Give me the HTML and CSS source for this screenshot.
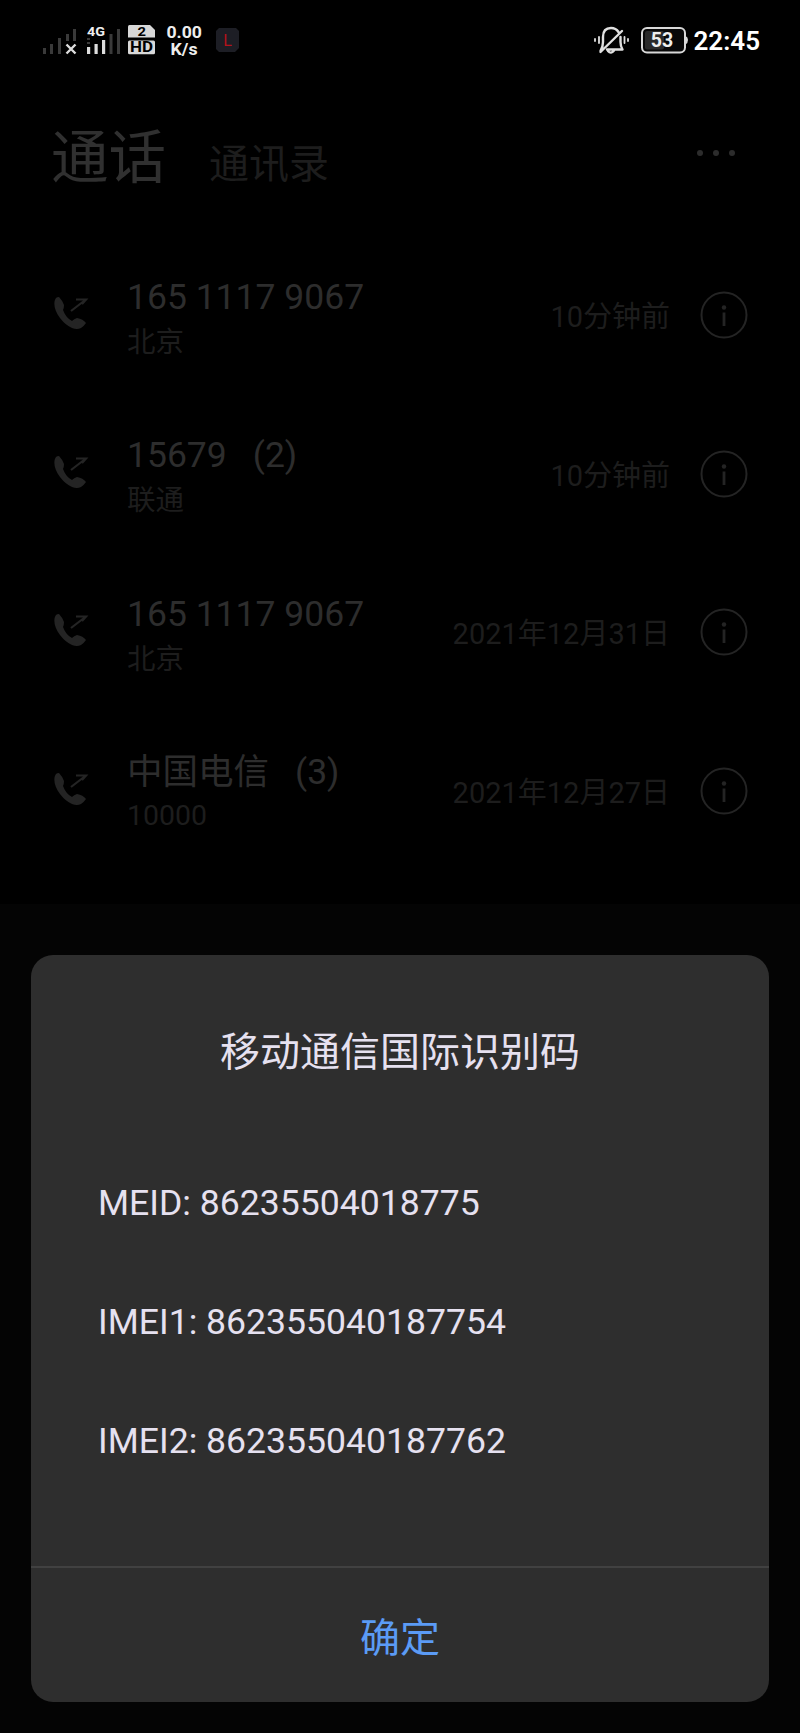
FILE: index.html
```
<!DOCTYPE html>
<html lang="zh-CN">
<head>
    <meta charset="UTF-8">
    <meta name="viewport" content="width=device-width, initial-scale=1.0">
    <title>通话</title>
    <link rel="stylesheet" href="styles.css">
</head>
<body>
    <svg class="defs" width="0" height="0">
        <symbol id="call" viewBox="0 0 36 34">
            <path d="M3 2C0 6 1 14 7 22C14 31 22 35 28 32Q31 30 33 27Q30 23 24 22Q21 23 19 25Q13 22 10 14Q11 12 11 9Q9 4 6 1Q4 1 3 2Z" fill="currentColor"/>
            <path d="M18 15L31 5M23 3.5H33L29 8" fill="none" stroke="currentColor" stroke-width="2.2"/>
        </symbol>
        <symbol id="info" viewBox="0 0 48 48">
            <circle cx="24" cy="24" r="22.5" fill="none" stroke="currentColor" stroke-width="2"/>
            <circle cx="24" cy="16.5" r="2.2" fill="currentColor"/>
            <path d="M24 21.500V35" stroke="currentColor" stroke-width="2.8"/>
        </symbol>
    </svg>

    <div class="status-bar">
        <svg class="status-left" width="240" height="80" viewBox="0 0 240 80">
            <!-- SIM 1 -->
            <path fill="#3a3a3a" d="M43 48h3v6h-3zM50 44h3v10h-3zM58 38h3v16h-3zM66 34h3v7h-3zM73 29h3v12h-3z"/>
            <path stroke="#ddd" stroke-width="2.4" d="M66.500 44.500l9 9M75.500 44.500l-9 9"/>
            <!-- SIM 2 -->
            <text x="87" y="36" class="net" textLength="18" lengthAdjust="spacingAndGlyphs">4G</text>
            <path fill="#ddd" d="M87 47h3.200v7h-3.200zM94.500 44h3.200v10h-3.200zM102 40h3.200v14h-3.200z"/>
            <path fill="#3a3a3a" d="M109.500 34h3v20h-3zM117 29h3v25h-3zM87 38h3v2h-3zM87 42h3v2h-3z"/>
            <path fill="#d8d8d8" d="M129.500 25H150L155 30V37.500H128V26.500Q128 25 129.500 25Z"/>
            <rect x="128" y="40.500" width="27" height="13.800" rx="1.500" fill="#d8d8d8"/>
            <text x="137.500" y="36" class="sim" textLength="8.500" lengthAdjust="spacingAndGlyphs">2</text>
            <text x="130" y="52.300" class="hd" textLength="23" lengthAdjust="spacingAndGlyphs">HD</text>
            <text x="166.500" y="38.300" class="speed" textLength="35.500" lengthAdjust="spacingAndGlyphs">0.00</text>
            <text x="170.500" y="54.800" class="speed" textLength="27" lengthAdjust="spacingAndGlyphs">K/s</text>
            <path fill="#1d1e25" d="M219 28h17l3 3v17l-4 4h-16l-3-3v-18z"/>
            <text x="227.500" y="46" class="app">L</text>
        </svg>
        <svg class="status-right" width="180" height="80" viewBox="590 0 180 80">
            <g fill="none" stroke="#e0e0e0" stroke-width="2.400" stroke-linecap="round" stroke-linejoin="round">
                <path d="M600.500 51Q603 47 603 42V37Q603 28 611 28Q616 28 618.500 32M620.500 37V42Q620.500 46 622.500 49.500H607M622 31L600.500 52M608 51Q611 54.500 614 50.500"/>
                <path stroke-width="1.800" d="M595 39v2M599 37v6M624.500 37v6M628 39v2"/>
            </g>
            <rect x="642" y="28" width="43" height="24.500" rx="5" fill="#080808" stroke="#d8d8d8" stroke-width="2"/>
            <rect x="645" y="31" width="19" height="18.500" rx="2" fill="#2a2a2a"/>
            <path fill="#d8d8d8" d="M685.500 36Q688 37 688 40Q688 43 685.500 44.500Z"/>
            <text x="662" y="47.200" class="battery">53</text>
            <text x="693.500" y="50.300" class="clock">22:45</text>
        </svg>
    </div>

    <div class="tabs">
        <span class="tab-active">通话</span>
        <span class="tab">通讯录</span>
        <span class="more"><i></i><i></i><i></i></span>
    </div>

    <div class="call-list">
        <div class="call">
            <svg class="call-icon"><use href="#call"/></svg>
            <div class="who">
                <div class="number">165 1117 9067</div>
                <div class="place">北京</div>
            </div>
            <div class="time">10分钟前</div>
            <svg class="info"><use href="#info"/></svg>
        </div>
        <div class="call">
            <svg class="call-icon"><use href="#call"/></svg>
            <div class="who">
                <div class="number">15679<span class="count">(2)</span></div>
                <div class="place">联通</div>
            </div>
            <div class="time">10分钟前</div>
            <svg class="info"><use href="#info"/></svg>
        </div>
        <div class="call">
            <svg class="call-icon"><use href="#call"/></svg>
            <div class="who">
                <div class="number">165 1117 9067</div>
                <div class="place">北京</div>
            </div>
            <div class="time">2021年12月31日</div>
            <svg class="info"><use href="#info"/></svg>
        </div>
        <div class="call">
            <svg class="call-icon"><use href="#call"/></svg>
            <div class="who">
                <div class="number">中国电信<span class="count">(3)</span></div>
                <div class="place digits">10000</div>
            </div>
            <div class="time">2021年12月27日</div>
            <svg class="info"><use href="#info"/></svg>
        </div>
    </div>

    <div class="bottom">
        <div class="dialog">
            <h1>移动通信国际识别码</h1>
            <div class="codes">
                <p>MEID: 86235504018775</p>
                <p>IMEI1: 862355040187754</p>
                <p>IMEI2: 862355040187762</p>
            </div>
            <button type="button">确定</button>
        </div>
    </div>
</body>
</html>
```
FILE: styles.css
```
* {
    box-sizing: border-box;
}
body {
    margin: 0;
    width: 800px;
    height: 1733px;
    overflow: hidden;
    display: flex;
    flex-direction: column;
    background: #000;
    font-family: Roboto, "Noto Sans CJK SC", sans-serif;
}
.defs {
    position: absolute;
}
.status-bar {
    display: flex;
    justify-content: space-between;
    height: 80px;
    padding-right: 30px;
}
.status-bar text {
    font-weight: bold;
    fill: #eee;
}
.status-bar .net {
    font-size: 12.5px;
}
.status-bar .sim,
.status-bar .hd {
    fill: #000;
    font-size: 13px;
}
.status-bar .hd {
    font-size: 14px;
}
.status-bar .speed {
    font-size: 16px;
}
.status-bar .app {
    font-size: 16px;
    font-weight: normal;
    fill: #b5121b;
    text-anchor: middle;
}
.status-bar .battery {
    font-size: 19.5px;
    text-anchor: middle;
}
.status-bar .clock {
    font-size: 26px;
    font-weight: 600;
    fill: #fff;
}
.tabs {
    display: flex;
    align-items: baseline;
    height: 156px;
    padding: 37px 65px 0 51px;
}
.tab-active {
    font-size: 57.5px;
    line-height: 84px;
    color: #303030;
}
.tab {
    margin-left: 43px;
    font-size: 40px;
    color: #1d1d1d;
}
.more {
    display: flex;
    gap: 10px;
    margin-left: auto;
    align-self: flex-start;
    padding-top: 33px;
}
.more i {
    width: 6px;
    height: 6px;
    border-radius: 50%;
    background: #2c2c2c;
}
.call-list {
    height: 668px;
}
.call {
    display: flex;
    align-items: center;
    height: 158.5px;
    padding: 0 52px 0 53px;
}
.call-icon {
    width: 36px;
    height: 34px;
    margin-top: -4px;
    color: #242424;
}
.who {
    margin-left: 38px;
    padding-top: 9px;
}
.number {
    height: 46px;
    font-size: 35.5px;
    line-height: 44px;
    color: #2d2d2d;
}
.count {
    margin-left: 26px;
}
.place {
    height: 44px;
    font-size: 28.5px;
    line-height: 44px;
    color: #1d1d1d;
}
.digits {
    line-height: 40px;
}
.time {
    margin-left: auto;
    padding-bottom: 2px;
    font-size: 29px;
    color: #1d1d1d;
}
.info {
    width: 48px;
    height: 48px;
    margin-left: 30px;
    color: #242424;
}
.bottom {
    flex: 1;
    padding: 51px 31px 0;
    background: #040404;
}
.dialog {
    height: 747px;
    display: flex;
    flex-direction: column;
    border-radius: 22px;
    background: #2e2e2e;
    color: #e6e1f0;
    overflow: hidden;
}
.dialog h1 {
    margin: 68px 0 0;
    font-size: 40px;
    line-height: 60px;
    font-weight: normal;
    text-align: center;
}
.codes {
    flex: 1;
    padding: 61px 67px 0;
}
.codes p {
    margin: 0;
    font-size: 35.6px;
    line-height: 119px;
}
.dialog button {
    height: 136px;
    border: 0;
    border-top: 2px solid #414141;
    background: none;
    font-family: inherit;
    font-size: 40px;
    padding: 0 6px 1px;
    color: #5b9bf5;
}
```
